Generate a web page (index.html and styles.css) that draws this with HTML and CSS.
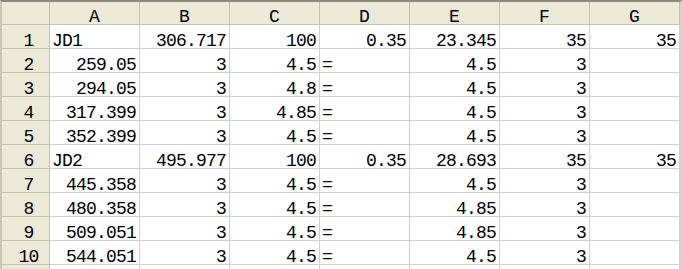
FILE: index.html
```html
<!DOCTYPE html>
<html>
<head>
<meta charset="utf-8">
<link rel="stylesheet" href="styles.css">
</head>
<body>
<div class="sheet">
  <div class="c h corner"></div>
  <div class="c h">A</div><div class="c h">B</div><div class="c h">C</div><div class="c h">D</div><div class="c h">E</div><div class="c h">F</div><div class="c h">G</div>

  <div class="c rh">1</div>
  <div class="c">JD1</div><div class="c r">306.717</div><div class="c r">100</div><div class="c r">0.35</div><div class="c r">23.345</div><div class="c r">35</div><div class="c r">35</div>

  <div class="c rh">2</div>
  <div class="c r">259.05</div><div class="c r">3</div><div class="c r">4.5</div><div class="c">=</div><div class="c r">4.5</div><div class="c r">3</div><div class="c"></div>

  <div class="c rh">3</div>
  <div class="c r">294.05</div><div class="c r">3</div><div class="c r">4.8</div><div class="c">=</div><div class="c r">4.5</div><div class="c r">3</div><div class="c"></div>

  <div class="c rh">4</div>
  <div class="c r">317.399</div><div class="c r">3</div><div class="c r">4.85</div><div class="c">=</div><div class="c r">4.5</div><div class="c r">3</div><div class="c"></div>

  <div class="c rh">5</div>
  <div class="c r">352.399</div><div class="c r">3</div><div class="c r">4.5</div><div class="c">=</div><div class="c r">4.5</div><div class="c r">3</div><div class="c"></div>

  <div class="c rh">6</div>
  <div class="c">JD2</div><div class="c r">495.977</div><div class="c r">100</div><div class="c r">0.35</div><div class="c r">28.693</div><div class="c r">35</div><div class="c r">35</div>

  <div class="c rh">7</div>
  <div class="c r">445.358</div><div class="c r">3</div><div class="c r">4.5</div><div class="c">=</div><div class="c r">4.5</div><div class="c r">3</div><div class="c"></div>

  <div class="c rh">8</div>
  <div class="c r">480.358</div><div class="c r">3</div><div class="c r">4.5</div><div class="c">=</div><div class="c r">4.85</div><div class="c r">3</div><div class="c"></div>

  <div class="c rh">9</div>
  <div class="c r">509.051</div><div class="c r">3</div><div class="c r">4.5</div><div class="c">=</div><div class="c r">4.85</div><div class="c r">3</div><div class="c"></div>

  <div class="c rh">10</div>
  <div class="c r">544.051</div><div class="c r">3</div><div class="c r">4.5</div><div class="c">=</div><div class="c r">4.5</div><div class="c r">3</div><div class="c"></div>

  <div class="c rh"></div>
  <div class="c"></div><div class="c"></div><div class="c"></div><div class="c"></div><div class="c"></div><div class="c"></div><div class="c"></div>
</div>
</body>
</html>
```

FILE: styles.css
```css
html, body {
  margin: 0;
  padding: 0;
  background: #ffffff;
  overflow: hidden;
}

.sheet {
  display: grid;
  grid-template-columns: 48px repeat(7, 90px);
  grid-template-rows: 23px repeat(11, 24px);
  width: 682px;
  height: 269px;
  overflow: hidden;
  box-sizing: border-box;
  border-top: 2px solid #8a887c;
  border-left: 2px solid #c9c6b8;
  border-right: 2px solid #d6d3ce;
  font-family: "Liberation Mono", "DejaVu Sans Mono", monospace;
  font-size: 18px;
  letter-spacing: -0.8px;
  line-height: 14px;
  color: #000000;
}

.c {
  box-sizing: border-box;
  display: flex;
  align-items: flex-end;
  justify-content: flex-start;
  padding: 0 3px 0 2px;
  border-right: 1px solid #d0d0d0;
  border-bottom: 1px solid #d0d0d0;
  white-space: nowrap;
}

.r {
  justify-content: flex-end;
}

.h {
  background: #ece9d8;
  justify-content: center;
  border-right-color: #c5c2b2;
  border-bottom-color: #c5c2b2;
}

.rh {
  background: #ece9d8;
  justify-content: center;
  padding: 0 0 0 6px;
  border-right-color: #c5c2b2;
  border-bottom-color: #c5c2b2;
}
```
